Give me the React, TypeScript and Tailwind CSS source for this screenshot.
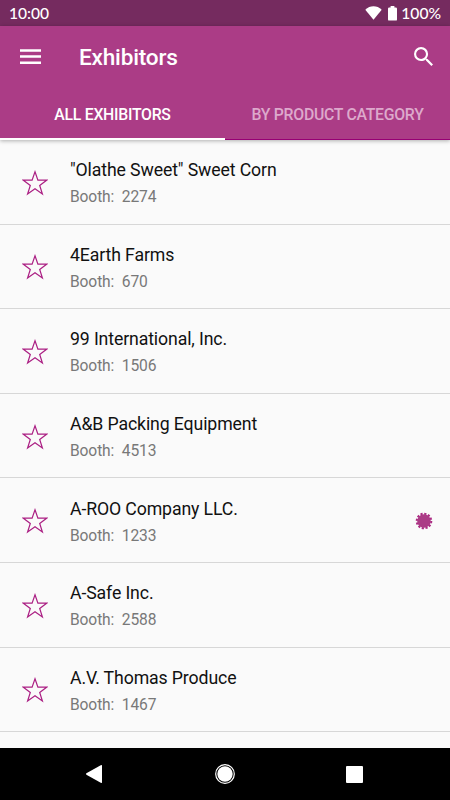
type Exhibitor = { name: string; booth: string; featured?: boolean };

const exhibitors: Exhibitor[] = [
  { name: '"Olathe Sweet" Sweet Corn', booth: '2274' },
  { name: '4Earth Farms', booth: '670' },
  { name: '99 International, Inc.', booth: '1506' },
  { name: 'A&B Packing Equipment', booth: '4513' },
  { name: 'A-ROO Company LLC.', booth: '1233', featured: true },
  { name: 'A-Safe Inc.', booth: '2588' },
  { name: 'A.V. Thomas Produce', booth: '1467' },
];

function StatusBar() {
  return (
    <div className="flex h-[26px] shrink-0 items-center bg-[#752b5f] pr-[9px] pl-[9px] font-['Lato',sans-serif] text-[15.6px] leading-none font-medium text-white">
      <span className="pt-px">10:00</span>
      <svg className="mr-[6px] ml-auto h-[14px] w-[17px]" viewBox="0 0 17 14" fill="currentColor">
        <path d="M0.3 3.8C5-.8 12-.8 16.7 3.8L8.5 13.8Z" />
      </svg>
      <svg className="h-[15px] w-[9px]" viewBox="0 0 9 15" fill="currentColor">
        <path d="M2.6 0h3.8v1.6h1.4q1.2 0 1.2 1.2v10.6q0 1.2-1.2 1.2H1.2Q0 14.6 0 13.4V2.8q0-1.2 1.2-1.2h1.4z" />
      </svg>
      <span className="ml-[4px] pt-px">100%</span>
    </div>
  );
}

function Header() {
  return (
    <header className="relative z-10 flex h-[114px] shrink-0 flex-col bg-[#ab3c86] text-white shadow-[0_1px_4px_rgba(0,0,0,0.3)]">
      <div className="flex h-[62px] items-center pr-[17px] pl-[20px]">
        <svg className="h-[16px] w-[21px]" viewBox="0 0 21 16" fill="currentColor">
          <path d="M0 .2h21v2.5H0zM0 6.3h21v2.5H0zM0 12.400h21v2.5H0z" />
        </svg>
        <h1 className="mt-[2px] ml-[38px] text-[22.6px] leading-none font-medium tracking-[-0.2px]">Exhibitors</h1>
        <svg className="mb-[2px] ml-auto h-[19px] w-[19px]" viewBox="3 3 17.49 17.49" fill="currentColor">
          <path d="M15.5 14h-.79l-.28-.27A6.471 6.471 0 0 0 16 9.5 6.5 6.5 0 1 0 9.5 16c1.61 0 3.09-.59 4.23-1.57l.27.28v.79l5 4.99L20.49 19l-4.99-5zm-6 0C7.01 14 5 11.99 5 9.5S7.01 5 9.5 5 14 7.01 14 9.5 11.99 14 9.5 14z" />
        </svg>
      </div>
      <nav className="grid flex-1 grid-cols-2 text-[15.8px] font-medium tracking-[-0.27px]">
        <button className="border-b-2 border-white pt-[4px]">ALL EXHIBITORS</button>
        <button className="border-b border-[#970074] pt-[3px] text-[#dda9cc]">BY PRODUCT CATEGORY</button>
      </nav>
    </header>
  );
}

function ExhibitorRow({ name, booth, featured }: Exhibitor) {
  return (
    <li className="flex h-[84.6px] items-center border-b border-[#d7d7d7] pr-[17px] pl-[22px]">
      <svg className="mt-[2px] h-[26px] w-[26px] shrink-0" viewBox="0 0 26 26" fill="none" stroke="#ab1f83" strokeWidth="1.2">
        <path d="M13 1.8 15.9 10.2H24.6L17.7 15.4 20.4 24 13 18.7 5.6 24 8.3 15.4 1.4 10.2H10.1Z" />
      </svg>
      <div className="mt-[3px] ml-[22px]">
        <p className="text-[17.7px] leading-[24px] tracking-[-0.12px] text-[#111]">{name}</p>
        <p className="mt-[4px] text-[15.6px] leading-[22px] tracking-[-0.12px] whitespace-pre text-[#787878]">{`Booth:  ${booth}`}</p>
      </div>
      {featured && (
        <svg className="mt-[2px] ml-auto h-[18px] w-[18px]" viewBox="0 0 18 18">
          <circle cx="9" cy="9" r="6.8" fill="#ab3c86" />
          <circle cx="9" cy="9" r="7.3" fill="none" stroke="#ab2c83" strokeWidth="2" strokeDasharray="2.2 1.622" />
        </svg>
      )}
    </li>
  );
}

function NavBar() {
  return (
    <div className="flex h-[52px] shrink-0 items-center justify-between bg-black pr-[87px] pl-[86px] text-white">
      <svg className="h-[18px] w-[16px]" viewBox="0 0 16 18" fill="currentColor">
        <path d="M.4 8.3 15.2.1q.8-.2.8.6v16.6q0 .8-.8.6L.4 9.7q-.7-.7 0-1.4z" />
      </svg>
      <svg className="ml-[2px] h-[20px] w-[20px]" viewBox="0 0 20 20">
        <circle cx="10" cy="10" r="9.3" fill="none" stroke="currentColor" strokeWidth="1.2" />
        <circle cx="10" cy="10" r="7.7" fill="currentColor" />
      </svg>
      <div className="h-[17px] w-[17px] rounded-[1px] bg-white" />
    </div>
  );
}

export default function App() {
  return (
    <div className="flex h-[800px] w-[450px] flex-col overflow-hidden bg-[#fafafa] font-['Roboto',sans-serif]">
      <StatusBar />
      <Header />
      <ul className="min-h-0 flex-1 overflow-hidden">
        {exhibitors.map((e) => (
          <ExhibitorRow key={e.name} {...e} />
        ))}
      </ul>
      <NavBar />
    </div>
  );
}
